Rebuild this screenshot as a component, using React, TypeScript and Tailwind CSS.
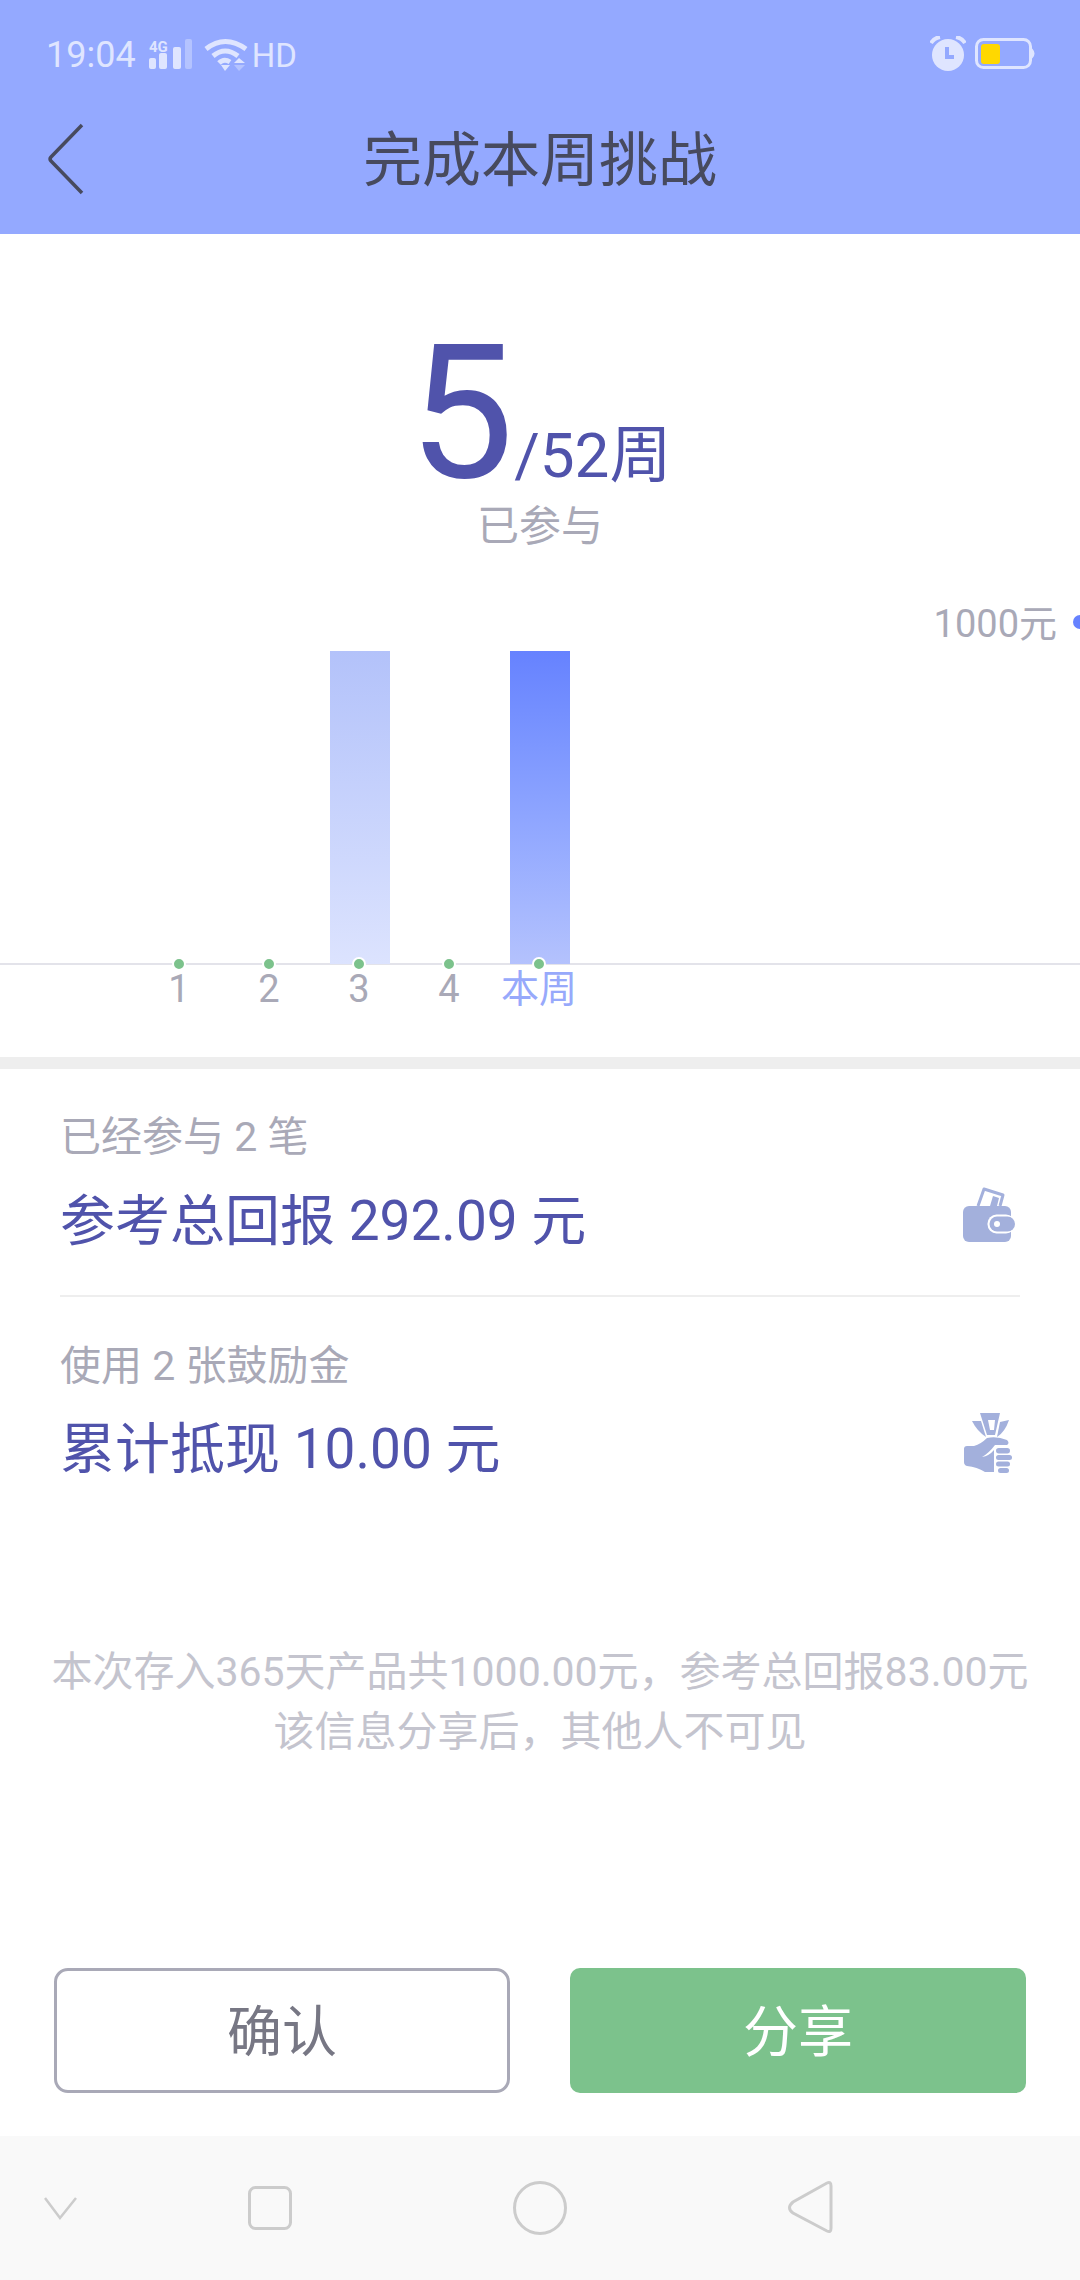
import React from "react";

const CJK = '"Roboto","Noto Sans CJK SC",sans-serif';

function Bar({ active, on, label, dim }: { active?: boolean; on?: boolean; label: string; dim?: boolean }) {
  return (
    <div className="relative h-full w-[90px] shrink-0">
      {on && (
        <div
          className={
            active
              ? "absolute left-[16px] top-[102px] h-[313px] w-[60px] bg-gradient-to-b from-[#6682ff] to-[#b4c2fd]"
              : "absolute left-[16px] top-[102px] h-[313px] w-[60px] bg-gradient-to-b from-[#b3c2fa] to-[#dce3fe]"
          }
        />
      )}
      <div className="absolute left-[38px] top-[408px] size-[14px] rounded-full border-2 border-white bg-[#7cc28c]" />
      <div
        className={
          "absolute left-0 top-[418px] w-full whitespace-nowrap text-center text-[38px] leading-[44px] " +
          (dim ? "text-[#97a9fb]" : "text-[#a9a9b7]")
        }
      >
        {label}
      </div>
    </div>
  );
}

function Wallet() {
  return (
    <svg width="52" height="55" viewBox="0 0 52 55" className="block">
      <path d="M15 19 L21 2 L40 8 L37 19" fill="none" stroke="#a3b0dc" strokeWidth="3" strokeLinejoin="round" />
      <path d="M27 19 L30 9 L36 11 L34 19 Z" fill="#a3b0dc" />
      <rect x="0" y="19" width="48" height="36" rx="6" fill="#a3b0dc" />
      <rect x="24.5" y="27.5" width="27.5" height="19" rx="9" fill="#ffffff" />
      <rect x="26.5" y="29.5" width="25.5" height="15" rx="7.5" fill="#a3b0dc" />
      <circle cx="34" cy="37" r="3" fill="#ffffff" />
    </svg>
  );
}

function Hand() {
  return (
    <svg width="49" height="61" viewBox="0 0 49 61" className="block">
      <g fill="#a3b0dc">
        <path d="M17 1 H37 L32 23 H24 Z M25 8 L27 18 H31 L32 8 Z" fillRule="evenodd" />
        <path d="M9 9 H18 L23 25 Q14 19 9 9 Z" />
        <path d="M46 8 L37 10 L34 25 Q42 20 46 8 Z" />
        <path d="M1 37 Q1 34 4 34 H11 Q18 32 24 26 Q34 24 44 28 Q47 31 44 33 H32 Q26 41 19 45 Q26 44 31 38 V60 H22 Q14 55 4 54 Q1 53 1 50 Z" />
        <rect x="33" y="36" width="14" height="5.5" rx="2.75" />
        <rect x="33" y="43" width="16" height="5" rx="2.5" />
        <rect x="33" y="49.5" width="14" height="5" rx="2.5" />
        <rect x="35" y="56" width="11" height="5" rx="2.5" />
      </g>
    </svg>
  );
}

export default function App() {
  return (
    <div className="flex h-[2280px] w-[1080px] flex-col overflow-hidden bg-white" style={{ fontFamily: CJK }}>
      {/* status + title */}
      <div className="h-[234px] shrink-0 bg-[#94a9ff]">
        <div className="flex h-[110px] items-center justify-between pl-[46px] pr-[45px]">
          <div className="flex items-center text-[#dfe5ff]">
            <span className="text-[36px] leading-none">19:04</span>
            <svg width="44" height="32" viewBox="0 0 44 32" className="ml-[13px]">
              <text x="0" y="13" fontSize="15" fontWeight="700" fill="#dfe5ff" fontFamily="Roboto">4G</text>
              <rect x="0" y="19" width="7" height="11" rx="2" fill="#dfe5ff" />
              <rect x="10" y="14" width="8" height="16" rx="2" fill="#dfe5ff" />
              <rect x="24" y="8" width="8" height="22" rx="2" fill="#dfe5ff" />
              <rect x="36" y="0" width="7" height="30" rx="2" fill="#b4c3ff" />
            </svg>
            <svg width="44" height="34" viewBox="0 0 44 34" className="ml-[11px]">
              <g fill="none" stroke="#dfe5ff" strokeWidth="5">
                <path d="M2 11 Q21 -4 42 11" />
                <path d="M9 18 Q21 8 34 18" />
                <path d="M15 25 Q20 20 26 24" />
              </g>
              <path d="M17 27 H26 L21 33 Z" fill="#dfe5ff" />
              <path d="M35 20 L41 25 H30 Z" fill="#dfe5ff" />
              <path d="M30 27 H41 L35 33 Z" fill="#b4c3ff" />
            </svg>
            <span className="ml-[4px] text-[33px] leading-none">HD</span>
          </div>
          <div className="flex items-center gap-[9px]">
            <svg width="36" height="38" viewBox="0 0 36 38">
              <circle cx="18" cy="19" r="16" fill="#dfe5ff" />
              <path d="M17 11 V21 H24" fill="none" stroke="#94a9ff" strokeWidth="4" />
              <path d="M1 7 Q4 2 10 1" fill="none" stroke="#dfe5ff" strokeWidth="4" />
              <path d="M35 7 Q32 2 26 1" fill="none" stroke="#dfe5ff" strokeWidth="4" />
            </svg>
            <svg width="60" height="34" viewBox="0 0 60 34">
              <rect x="1.5" y="1.5" width="54" height="28" rx="7" fill="none" stroke="#dfe5ff" strokeWidth="3" />
              <rect x="6" y="6" width="19" height="20" rx="3" fill="#ffd800" />
              <path d="M57 12 Q60 15.5 57 19 Z" fill="#dfe5ff" stroke="#dfe5ff" strokeWidth="2" />
            </svg>
          </div>
        </div>
        <div className="relative flex h-[100px] items-center justify-center">
          <svg width="40" height="72" viewBox="0 0 40 72" className="absolute left-[47px] top-[13px]">
            <path d="M35 2 L4 34 Q2 36 4 38 L35 70" fill="none" stroke="#474a5e" strokeWidth="3.5" />
          </svg>
          <span className="text-[59px] leading-none text-[#474a5e]">完成本周挑战</span>
        </div>
      </div>

      {/* headline */}
      <div className="flex shrink-0 flex-col items-center pt-[99px]">
        <div className="flex h-[160px] items-baseline text-[#5053ab]">
          <span className="text-[188px] leading-[160px]">5</span>
          <span className="text-[62px] leading-none">/52周</span>
        </div>
        <div className="mt-[12px] text-[42px] leading-[44px] text-[#a9a9b7]">已参与</div>
      </div>

      {/* chart */}
      <div className="relative h-[508px] shrink-0">
        <div className="absolute left-0 right-0 top-[414px] h-[2px] bg-[#e3e3ea]" />
        <div className="flex h-full pl-[134px]">
          <Bar label="1" />
          <Bar label="2" />
          <Bar label="3" on />
          <Bar label="4" />
          <Bar label="本周" on active dim />
        </div>
        <div className="absolute right-[23px] top-[53px] text-[38px] leading-[44px] text-[#a9a9b7]">1000元</div>
        <div className="absolute left-[1073px] top-[66px] size-[14px] rounded-full bg-[#6682ff]" />
      </div>

      <div className="h-[12px] shrink-0 bg-[#eeeeee]" />

      {/* rows */}
      <div className="px-[60px] pt-[46px]">
        <div className="border-b-2 border-[#eeeeee] pb-[41px]">
          <div className="flex items-end justify-between pr-[5px]">
            <div>
              <div className="text-[41px] leading-[44px] text-[#a9a9b7]">已经参与 2 笔</div>
              <div className="mt-[29px] text-[55px] leading-[66px] text-[#5053ab]">参考总回报 292.09 元</div>
            </div>
            <div className="mb-[12px]">
              <Wallet />
            </div>
          </div>
        </div>
        <div className="flex items-end justify-between pr-[8px] pt-[47px]">
          <div>
            <div className="text-[41px] leading-[44px] text-[#a9a9b7]">使用 2 张鼓励金</div>
            <div className="mt-[28px] text-[55px] leading-[66px] text-[#5053ab]">累计抵现 10.00 元</div>
          </div>
          <div className="mb-[9px]">
            <Hand />
          </div>
        </div>
      </div>

      <div className="mt-[160px] text-center text-[41px] leading-[60px] text-[#c4c4ce]">
        <div className="whitespace-nowrap">本次存入365天产品共1000.00元，参考总回报83.00元</div>
        <div>该信息分享后，其他人不可见</div>
      </div>

      <div className="flex-1" />

      {/* buttons */}
      <div className="flex justify-between px-[54px] pb-[43px]">
        <div className="flex h-[125px] w-[456px] items-center justify-center rounded-[14px] border-[3px] border-[#a9a9b7] pt-[4px] text-[55px] text-[#777784]">确认</div>
        <div className="flex h-[125px] w-[456px] items-center justify-center rounded-[10px] bg-[#7cc28c] pt-[4px] text-[55px] text-white">分享</div>
      </div>

      {/* nav */}
      <div className="relative h-[144px] shrink-0 bg-[#f9f9f9]">
        <svg width="1080" height="144" viewBox="0 0 1080 144" fill="none" stroke="#cccccc" strokeWidth="3">
          <path d="M45 62 L60 82 L76 62" strokeWidth="2.5" />
          <rect x="249.5" y="51.5" width="41" height="41" rx="6" />
          <circle cx="540" cy="72" r="25.5" />
          <path d="M827 47 Q831 45 831 50 V92 Q831 97 827 95 L793 77 Q786 72 793 66 Z" />
        </svg>
      </div>
    </div>
  );
}
